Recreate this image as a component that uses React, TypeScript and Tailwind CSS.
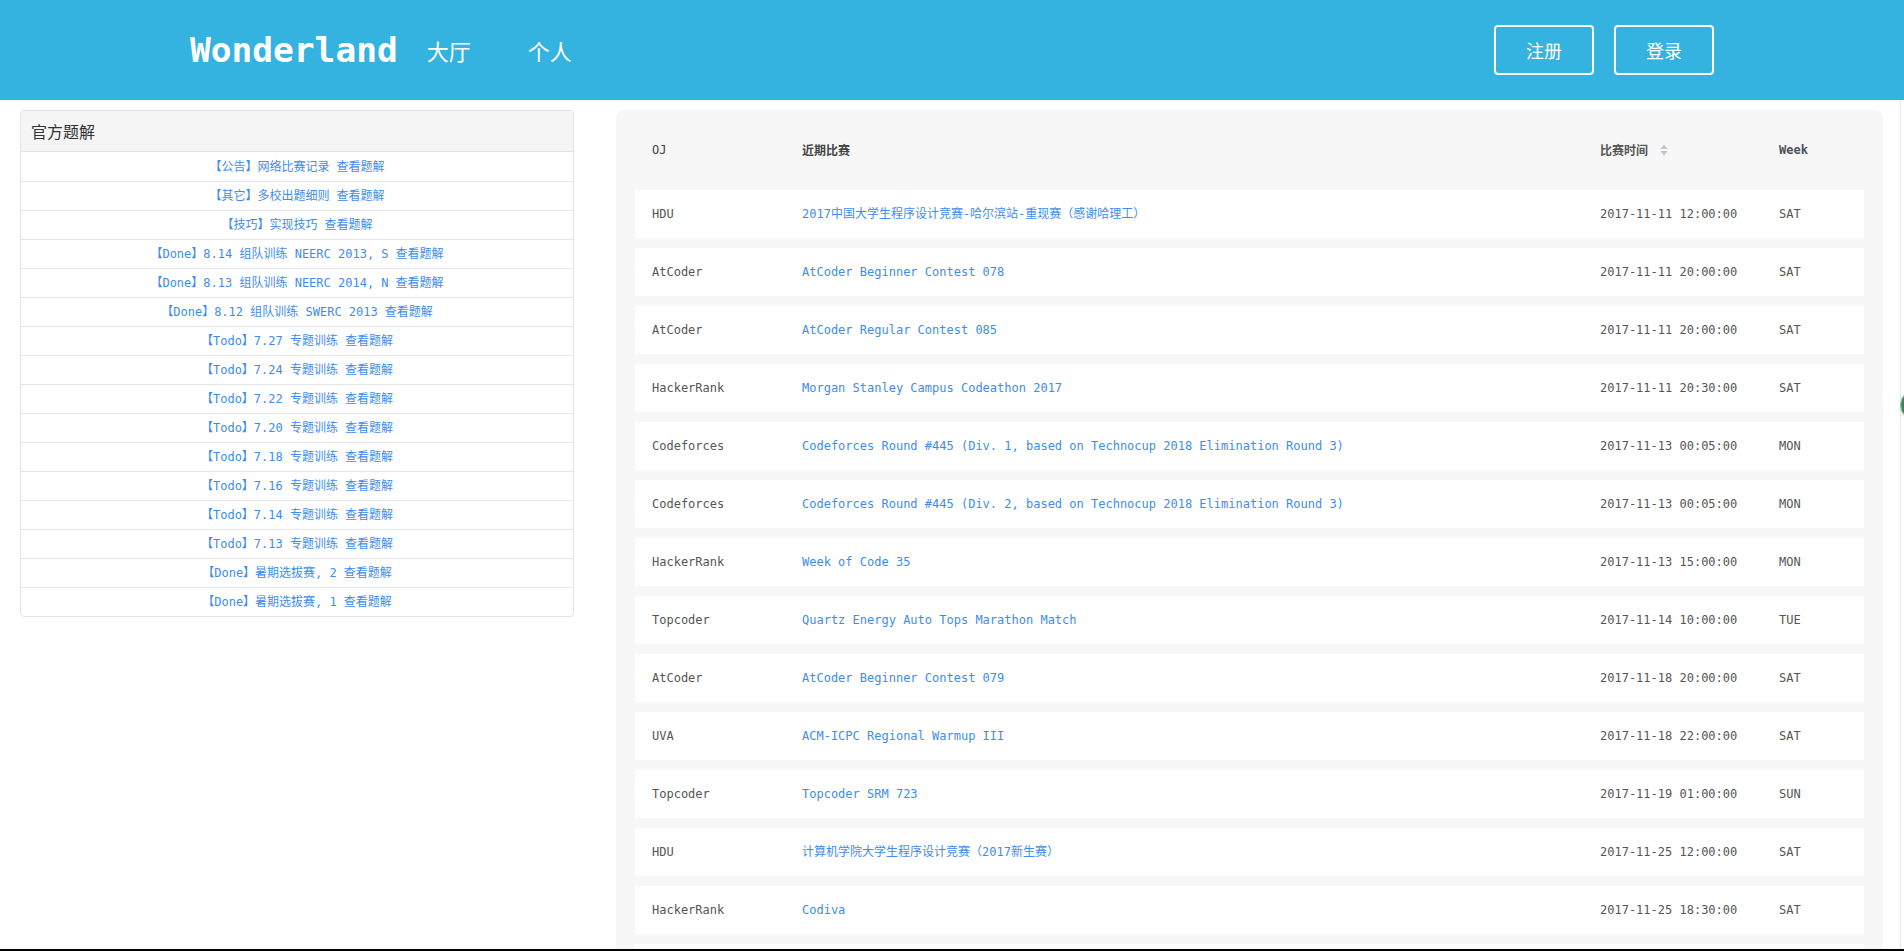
import React from 'react';

const mono = '"DejaVu Sans Mono", "Noto Sans CJK SC", monospace';
const sans = '"Noto Sans CJK SC", "Liberation Sans", sans-serif';

const solutions: string[] = [
  '【公告】网络比赛记录',
  '【其它】多校出题细则',
  '【技巧】实现技巧',
  '【Done】8.14 组队训练 NEERC 2013, S',
  '【Done】8.13 组队训练 NEERC 2014, N',
  '【Done】8.12 组队训练 SWERC 2013',
  '【Todo】7.27 专题训练',
  '【Todo】7.24 专题训练',
  '【Todo】7.22 专题训练',
  '【Todo】7.20 专题训练',
  '【Todo】7.18 专题训练',
  '【Todo】7.16 专题训练',
  '【Todo】7.14 专题训练',
  '【Todo】7.13 专题训练',
  '【Done】暑期选拔赛, 2',
  '【Done】暑期选拔赛, 1',
];

type Contest = { oj: string; name: string; time: string; week: string };

const contests: Contest[] = [
  { oj: 'HDU', name: '2017中国大学生程序设计竞赛-哈尔滨站-重现赛（感谢哈理工）', time: '2017-11-11 12:00:00', week: 'SAT' },
  { oj: 'AtCoder', name: 'AtCoder Beginner Contest 078', time: '2017-11-11 20:00:00', week: 'SAT' },
  { oj: 'AtCoder', name: 'AtCoder Regular Contest 085', time: '2017-11-11 20:00:00', week: 'SAT' },
  { oj: 'HackerRank', name: 'Morgan Stanley Campus Codeathon 2017', time: '2017-11-11 20:30:00', week: 'SAT' },
  { oj: 'Codeforces', name: 'Codeforces Round #445 (Div. 1, based on Technocup 2018 Elimination Round 3)', time: '2017-11-13 00:05:00', week: 'MON' },
  { oj: 'Codeforces', name: 'Codeforces Round #445 (Div. 2, based on Technocup 2018 Elimination Round 3)', time: '2017-11-13 00:05:00', week: 'MON' },
  { oj: 'HackerRank', name: 'Week of Code 35', time: '2017-11-13 15:00:00', week: 'MON' },
  { oj: 'Topcoder', name: 'Quartz Energy Auto Tops Marathon Match', time: '2017-11-14 10:00:00', week: 'TUE' },
  { oj: 'AtCoder', name: 'AtCoder Beginner Contest 079', time: '2017-11-18 20:00:00', week: 'SAT' },
  { oj: 'UVA', name: 'ACM-ICPC Regional Warmup III', time: '2017-11-18 22:00:00', week: 'SAT' },
  { oj: 'Topcoder', name: 'Topcoder SRM 723', time: '2017-11-19 01:00:00', week: 'SUN' },
  { oj: 'HDU', name: '计算机学院大学生程序设计竞赛（2017新生赛）', time: '2017-11-25 12:00:00', week: 'SAT' },
  { oj: 'HackerRank', name: 'Codiva', time: '2017-11-25 18:30:00', week: 'SAT' },
];

const SortIcon = () => (
  <svg width="8" height="12" viewBox="0 0 8 12" className="ml-[12px]">
    <path d="M4 0.5 L7.5 5 L0.5 5 Z" fill="#c0c4cc" />
    <path d="M4 11.5 L7.5 7 L0.5 7 Z" fill="#c0c4cc" />
  </svg>
);

const cols = 'grid grid-cols-[150px_798px_179px_1fr] items-center pl-[17px]';

const App: React.FC = () => {
  return (
    <div className="h-screen overflow-hidden bg-white relative">
      <header className="h-[100px] bg-[#35b3e0] flex items-center px-[190px] text-white">
        <span className="text-[34.5px] font-bold leading-none" style={{ fontFamily: mono }}>Wonderland</span>
        <a className="ml-[29px] text-[22px] leading-none" style={{ fontFamily: sans }}>大厅</a>
        <a className="ml-[57px] text-[22px] leading-none" style={{ fontFamily: sans }}>个人</a>
        <div className="ml-auto flex gap-[20px]">
          <button className="w-[100px] h-[50px] border-2 border-white rounded-[4px] text-[18px]" style={{ fontFamily: sans }}>注册</button>
          <button className="w-[100px] h-[50px] border-2 border-white rounded-[4px] text-[18px]" style={{ fontFamily: sans }}>登录</button>
        </div>
      </header>

      <div className="flex items-start pl-[20px] pt-[10px]">
        <div className="w-[554px] border border-[#e3e3e3] rounded-[4px] overflow-hidden">
          <div className="h-[41px] bg-[#f5f5f5] border-b border-[#e3e3e3] flex items-center px-[10px] text-[16px] text-[#333]" style={{ fontFamily: sans }}>
            官方题解
          </div>
          {solutions.map((s, i) => (
            <div
              key={i}
              className={`h-[29px] flex items-center justify-center text-[12px] text-[#3d8cf0] ${i > 0 ? 'border-t border-[#e6e6e6]' : ''}`}
              style={{ fontFamily: mono }}
            >
              <a>{s}</a>
              <a className="ml-[7px]">查看题解</a>
            </div>
          ))}
        </div>

        <div className="ml-[42px] w-[1267px] bg-[#f7f7f7] rounded-[8px] px-[19px] pt-[10px] pb-[10px]" style={{ fontFamily: mono }}>
          <div className={`${cols} h-[60px] text-[12px]`}>
            <span className="text-[#444]">OJ</span>
            <span className="text-[#444] font-bold" style={{ fontFamily: sans }}>近期比赛</span>
            <span className="flex items-center text-[#555] font-bold" style={{ fontFamily: sans }}>
              比赛时间
              <SortIcon />
            </span>
            <span className="text-[#4b5060] font-bold">Week</span>
          </div>
          <div className="flex flex-col gap-[10px] mt-[10px]">
            {contests.map((c, i) => (
              <div key={i} className={`${cols} h-[48px] bg-white text-[12px]`}>
                <span className="text-[#555]">{c.oj}</span>
                <a className="text-[#3d8cf0] whitespace-nowrap">{c.name}</a>
                <span className="text-[#555]">{c.time}</span>
                <span className="text-[#555]">{c.week}</span>
              </div>
            ))}
            {/* next row, scrolled below the fold */}
            <div className="h-[48px] bg-white" />
          </div>
        </div>
      </div>

      <div className="absolute left-[1900px] top-[100px] bottom-0 w-px bg-[#e8e8e8]" />
      <div className="absolute left-[1900px] top-[389px] w-[32px] h-[32px] rounded-full border border-[#bbb] bg-[#2e8b57] shadow" />
      <div className="absolute left-0 right-0 bottom-0 h-[2px] bg-black" />
    </div>
  );
};

export default App;
